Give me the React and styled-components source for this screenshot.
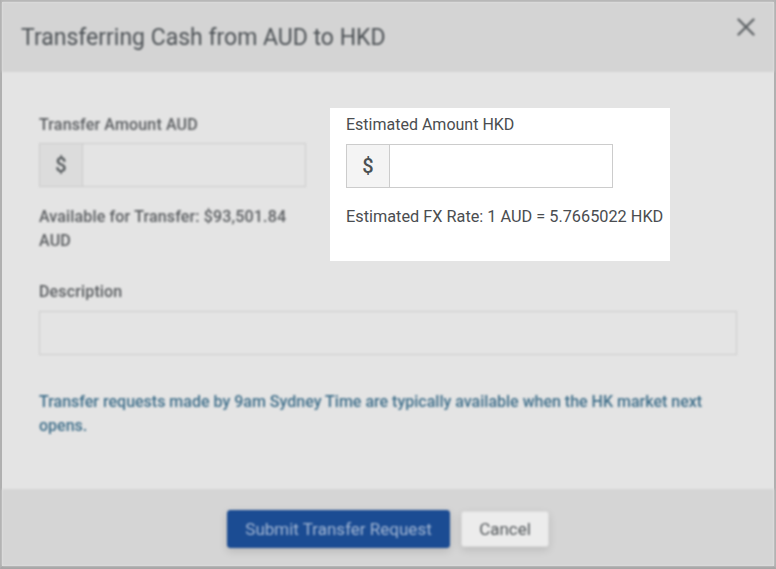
import React from "react";
import styled, { createGlobalStyle, css } from "styled-components";

const GlobalStyle = createGlobalStyle`
  html, body { margin: 0; padding: 0; }
  body {
    font-family: Roboto, "Liberation Sans", Arial, sans-serif;
    background: #e4e4e4;
  }
  * { box-sizing: border-box; }
`;

const dimmed = css`
  filter: blur(0.9px);
`;

const Dialog = styled.div`
  width: 776px;
  height: 569px;
  display: flex;
  flex-direction: column;
  border-top: 2px solid #b4b4b4;
  border-left: 2px solid #b0b0b0;
  border-right: 2px solid #b0b0b0;
  border-bottom: 3px solid #a6a6a6;
  background: #e4e4e4;
`;

const Header = styled.header`
  height: 70px;
  flex: none;
  display: flex;
  align-items: center;
  justify-content: space-between;
  padding: 0 19px 0 19px;
  background: #d4d4d4;
  ${dimmed}
`;

const Title = styled.h2`
  margin: 0;
  font-size: 23px;
  font-weight: 400;
  color: #4c5155;
`;

const CloseButton = styled.button`
  width: 18px;
  height: 18px;
  padding: 0;
  border: 0;
  background: none;
  display: flex;
  align-items: center;
  justify-content: center;
  margin-top: -20px;
`;

const Body = styled.main`
  flex: 1;
  padding: 36px 37px 0;
  display: flex;
  flex-direction: column;
`;

const Row = styled.div`
  display: flex;
  align-items: flex-start;
  gap: 24px;
`;

const Column = styled.div`
  width: 267px;
  padding-top: 8px;
  ${dimmed}
`;

const Highlight = styled.div`
  width: 340px;
  padding: 8px 6px 32px 16px;
  background: #ffffff;
`;

const dimText = css`
  font-weight: 500;
  letter-spacing: 0.15px;
  color: #5a5d60;
`;

const Label = styled.label`
  display: block;
  font-size: 16px;
  line-height: 18px;
  font-weight: 400;
  color: #4a4d50;
  ${(p) => p.$dim && dimText}
`;

const InputGroup = styled.div`
  display: flex;
  width: 267px;
  height: 44px;
  margin-top: ${(p) => p.$gap || 10}px;
  border: 1px solid ${(p) => (p.$dim ? "#cbcbcb" : "#cccccc")};
  background: ${(p) => (p.$dim ? "#e4e4e4" : "#ffffff")};
`;

const Addon = styled.span`
  width: 43px;
  flex: none;
  display: flex;
  align-items: center;
  justify-content: center;
  font-size: 20px;
  font-weight: 500;
  color: ${(p) => (p.$dim ? "#4f5457" : "#4a4f52")};
  background: ${(p) => (p.$dim ? "#dcdcdc" : "#f4f4f4")};
  border-right: 1px solid ${(p) => (p.$dim ? "#cbcbcb" : "#cccccc")};
`;

const Field = styled.input`
  flex: 1;
  min-width: 0;
  border: 0;
  outline: none;
  background: transparent;
  font: inherit;
`;

const Helper = styled.p`
  margin: ${(p) => p.$top || 17}px 0 0;
  font-size: ${(p) => (p.$dim ? "16px" : "16.3px")};
  line-height: 24px;
  font-weight: 400;
  white-space: ${(p) => (p.$dim ? "normal" : "nowrap")};
  color: #4a4d50;
  ${(p) => p.$dim && dimText}
`;

const DescriptionField = styled.div`
  margin-top: 22px;
  ${dimmed}
`;

const Textbox = styled.div`
  height: 44px;
  margin-top: 10px;
  border: 1px solid #cbcbcb;
  background: #e4e4e4;
`;

const Note = styled.p`
  margin: 35px 0 0;
  font-size: 16px;
  line-height: 24px;
  font-weight: 500;
  color: #3d6d89;
  ${dimmed}
`;

const Footer = styled.footer`
  height: 77px;
  flex: none;
  display: flex;
  align-items: center;
  justify-content: center;
  gap: 11px;
  background: #d5d5d5;
  padding-top: 3px;
  ${dimmed}
`;

const Button = styled.button`
  font-family: Roboto, "Liberation Sans", Arial, sans-serif;
  font-size: 17px;
  font-weight: 400;
  border-radius: 3px;
  cursor: pointer;
  ${(p) =>
    p.$primary
      ? css`
          width: 223px;
          height: 38px;
          background: #1b4c93;
          color: #a3b7d4;
          border: 1px solid #1b4c93;
          box-shadow: 0 3px 8px rgba(0, 0, 0, 0.15);
        `
      : css`
          width: 88px;
          height: 36px;
          background: #ececec;
          color: #505558;
          border: 1px solid #dadada;
          box-shadow: 0 3px 8px rgba(0, 0, 0, 0.12);
        `}
`;

const CloseIcon = () => (
  <svg width="18" height="18" viewBox="0 0 18 18" aria-hidden="true">
    <path d="M1.5 1.5 L16.5 16.5 M16.5 1.5 L1.5 16.5" stroke="#5f6366" strokeWidth="2.4" strokeLinecap="round" />
  </svg>
);

export default function App() {
  return (
    <>
      <GlobalStyle />
      <Dialog>
        <Header>
          <Title>Transferring Cash from AUD to HKD</Title>
          <CloseButton aria-label="Close">
            <CloseIcon />
          </CloseButton>
        </Header>
        <Body>
          <Row>
            <Column>
              <Label $dim>Transfer Amount AUD</Label>
              <InputGroup $dim $gap={9}>
                <Addon $dim>$</Addon>
                <Field />
              </InputGroup>
              <Helper $dim $top={18}>Available for Transfer: $93,501.84 AUD</Helper>
            </Column>
            <Highlight>
              <Label>Estimated Amount HKD</Label>
              <InputGroup>
                <Addon>$</Addon>
                <Field />
              </InputGroup>
              <Helper>Estimated FX Rate: 1 AUD = 5.7665022 HKD</Helper>
            </Highlight>
          </Row>
          <DescriptionField>
            <Label $dim>Description</Label>
            <Textbox />
          </DescriptionField>
          <Note>
            Transfer requests made by 9am Sydney Time are typically available when the HK market next opens.
          </Note>
        </Body>
        <Footer>
          <Button $primary>Submit Transfer Request</Button>
          <Button>Cancel</Button>
        </Footer>
      </Dialog>
    </>
  );
}
